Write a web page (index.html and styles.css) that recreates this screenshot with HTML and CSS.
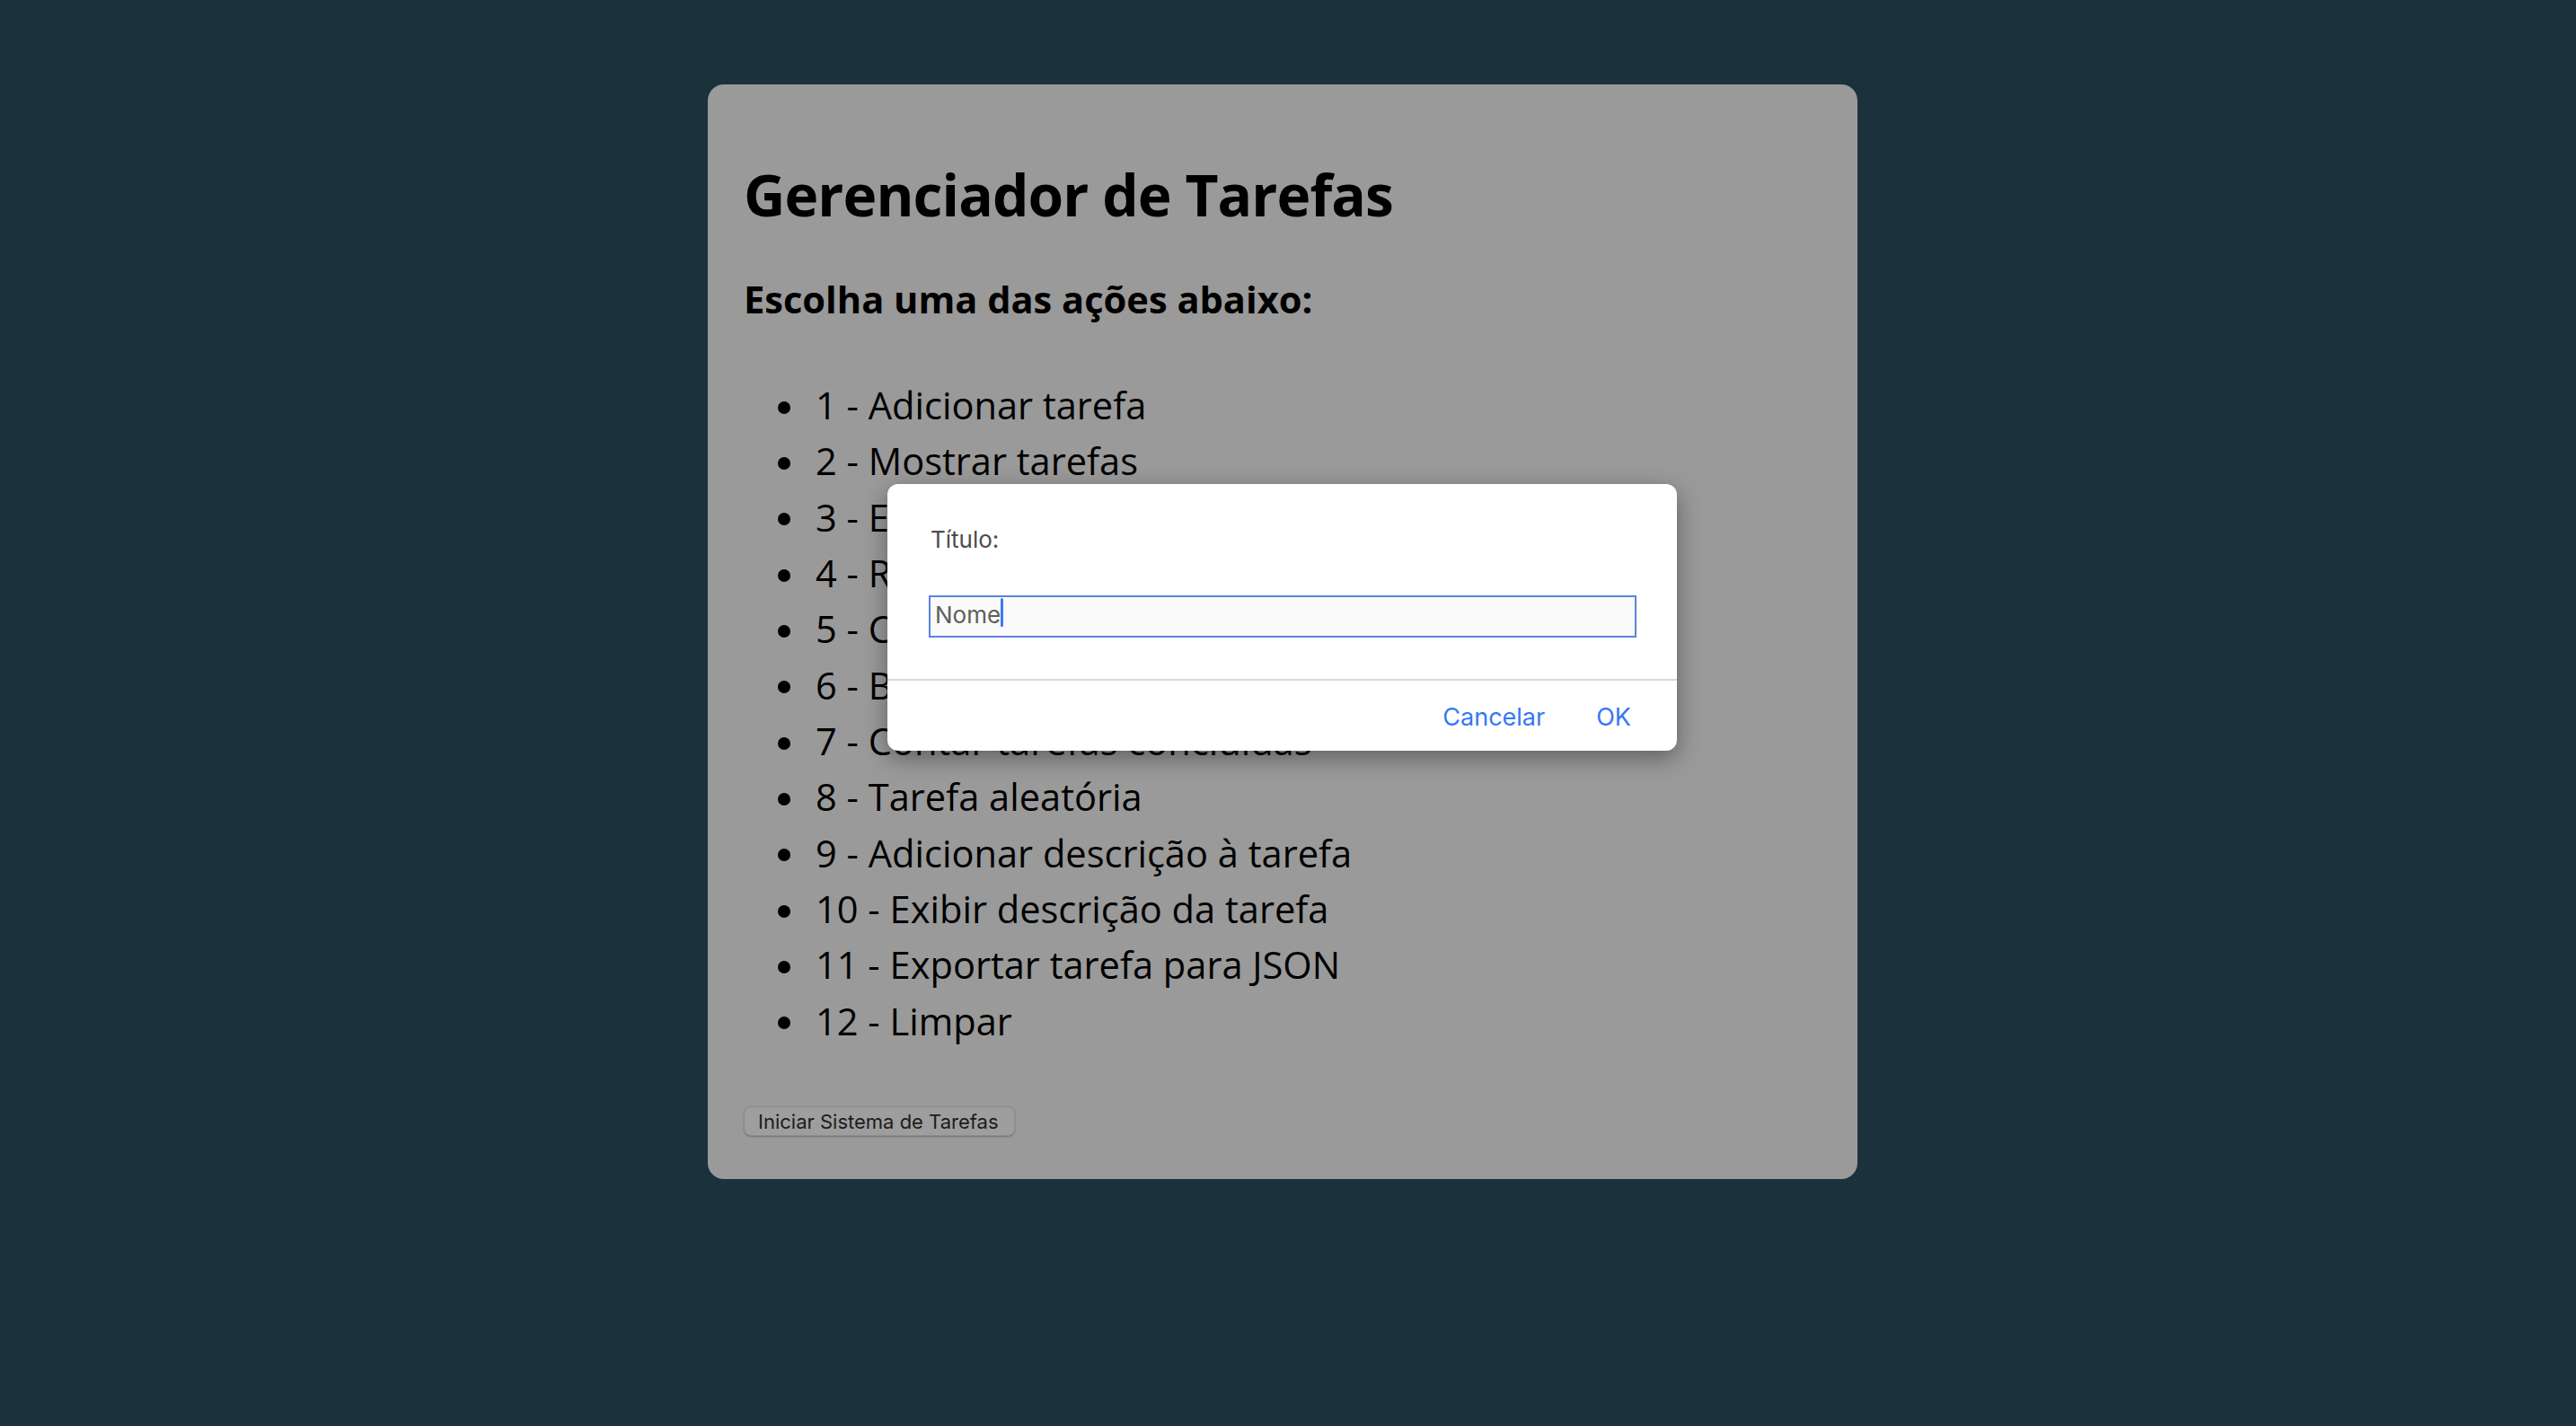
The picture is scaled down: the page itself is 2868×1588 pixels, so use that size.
FILE: index.html
```html
<!DOCTYPE html>
<html lang="pt-BR">
<head>
<meta charset="utf-8">
<title>Gerenciador de Tarefas</title>
<link rel="stylesheet" href="styles.css">
</head>
<body>
<div class="page">
  <main class="card">
    <h1 class="title">Gerenciador de Tarefas</h1>
    <h2 class="subtitle">Escolha uma das ações abaixo:</h2>
    <ul class="actions">
      <li>1 - Adicionar tarefa</li>
      <li>2 - Mostrar tarefas</li>
      <li>3 - Editar tarefa</li>
      <li>4 - Remover tarefa</li>
      <li>5 - Concluir tarefa</li>
      <li>6 - Buscar tarefa</li>
      <li>7 - Contar tarefas concluídas</li>
      <li>8 - Tarefa aleatória</li>
      <li>9 - Adicionar descrição à tarefa</li>
      <li>10 - Exibir descrição da tarefa</li>
      <li>11 - Exportar tarefa para JSON</li>
      <li>12 - Limpar</li>
    </ul>
    <button class="start-btn" type="button">Iniciar Sistema de Tarefas</button>
  </main>
</div>

<div class="dialog" role="dialog">
  <div class="dialog-body">
    <div class="dialog-label">Título:</div>
    <div class="dialog-field"><span class="field-text">Nome</span><span class="caret"></span></div>
  </div>
  <div class="dialog-actions">
    <span class="dialog-btn">Cancelar</span>
    <span class="dialog-btn">OK</span>
  </div>
</div>
</body>
</html>
```

FILE: styles.css
```css
html, body {
  margin: 0;
  padding: 0;
}

body {
  background: #1b323d;
  font-family: "Open Sans", "Noto Sans", sans-serif;
  color: #000;
  min-height: 1588px;
  position: relative;
}

.page {
  display: flex;
  justify-content: center;
  padding: 94px 12px 0 0;
}

.card {
  box-sizing: border-box;
  width: 1280px;
  background: #9a9a9a;
  border-radius: 18px;
  padding: 40px 40px 48px 40px;
}

.title {
  margin: 39px 0 0 0;
  font-size: 64px;
  line-height: 88px;
  font-weight: 700;
  letter-spacing: -0.9px;
}

.subtitle {
  margin: 44px 0 0 0;
  font-size: 41.6px;
  line-height: 57px;
  font-weight: 700;
}

.actions {
  margin: 58px 0 0 0;
  padding-left: 80px;
  list-style: none;
  font-size: 41.6px;
  line-height: 62.35px;
}

.actions li::before {
  content: "";
  display: inline-block;
  width: 14px;
  height: 14px;
  border-radius: 50%;
  background: #000;
  margin-left: -42px;
  margin-right: 28px;
  vertical-align: 6.5px;
}

.start-btn {
  display: block;
  margin: 64px 0 0 0;
  box-sizing: border-box;
  width: 302px;
  height: 33px;
  padding: 0 0 0 15px;
  text-align: left;
  font-family: "Inter", "Liberation Sans", sans-serif;
  font-size: 22px;
  color: #1c1c1c;
  background: #9e9e9e;
  border: 1px solid #8c8c8c;
  border-radius: 8px;
  box-shadow: 0 1px 2px rgba(0, 0, 0, 0.25);
}

/* Prompt dialog overlay */
.dialog {
  position: absolute;
  left: 988px;
  top: 539px;
  width: 879px;
  height: 297px;
  box-sizing: border-box;
  background: #fff;
  border-radius: 12px;
  box-shadow: 0 8px 26px rgba(0, 0, 0, 0.38);
  font-family: "Inter", "Liberation Sans", sans-serif;
  display: flex;
  flex-direction: column;
}

.dialog-body {
  padding: 46px 46px 0 46px;
  border-bottom: 2px solid #d8d8d8;
  height: 219px;
  box-sizing: border-box;
}

.dialog-label {
  font-size: 26px;
  line-height: 32px;
  color: #4d4d4d;
  padding-left: 2px;
}

.dialog-field {
  margin-top: 46px;
  box-sizing: border-box;
  width: 788px;
  height: 47px;
  border: 2px solid #5a83dc;
  background: #fafafa;
  display: flex;
  align-items: flex-start;
  padding-left: 5px;
}

.field-text {
  font-size: 26px;
  line-height: 26px;
  padding-top: 6.5px;
  color: #5e5e5e;
}

.caret {
  width: 3px;
  height: 32px;
  margin-top: 1px;
  border-radius: 1.5px;
  background: #3b7bf2;
}

.dialog-actions {
  display: flex;
  justify-content: flex-end;
  gap: 57px;
  padding: 24px 51px 0 0;
}

.dialog-btn {
  font-size: 27px;
  line-height: 33px;
  color: #3478f6;
}
```
